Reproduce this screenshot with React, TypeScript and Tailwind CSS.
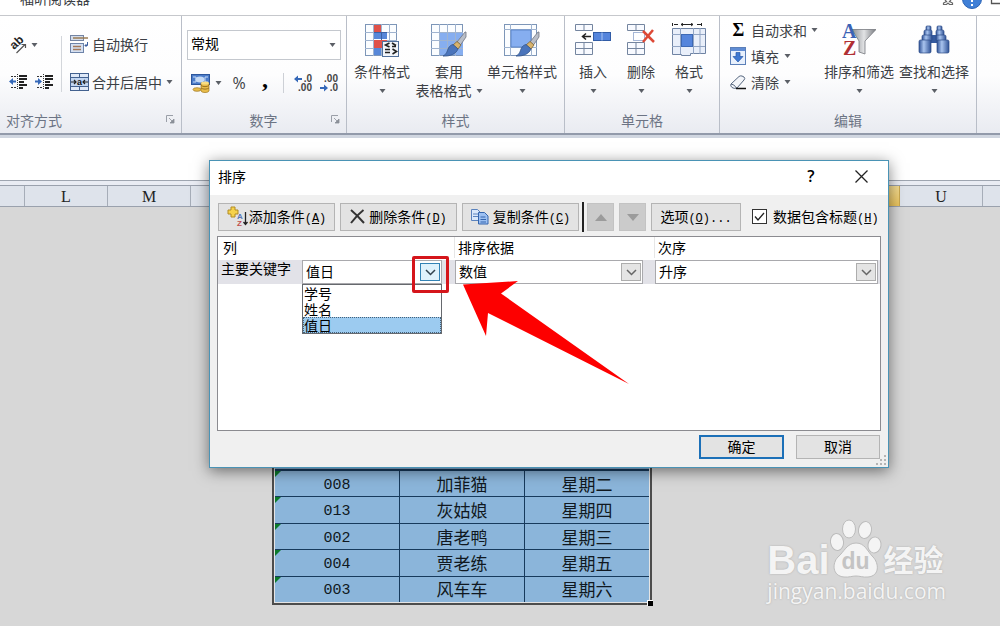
import type { ReactNode } from "react";

const cjk = "font-['Noto_Sans_CJK_SC',sans-serif]";

function Caret() {
  return (
    <svg width="7" height="4" viewBox="0 0 7 4" className="block shrink-0" aria-hidden="true">
      <path d="M0.5 0h6L3.5 4z" fill="#5b5f66" />
    </svg>
  );
}

function Chevron({ color }: { color: string }) {
  return (
    <svg width="11" height="7" viewBox="0 0 11 7" fill="none" aria-hidden="true">
      <path d="M1 1l4.5 4.5L10 1" stroke={color} strokeWidth="1.5" />
    </svg>
  );
}

function Launcher() {
  return (
    <button type="button" aria-label="更多" className="shrink-0">
      <svg width="9" height="9" viewBox="0 0 9 9" fill="none">
        <path d="M0.5 7V0.5H7" stroke="#9a9fa8" />
        <path d="M3 3l4 4M8 4v4H4z" stroke="#8a8f98" fill="#8a8f98" strokeWidth="0.8" />
      </svg>
    </button>
  );
}

function Group({ title, width, launcher, children }: { title: string; width: string; launcher?: boolean; children: ReactNode }) {
  return (
    <section className={`flex shrink-0 flex-col border-r border-[#b9bec8] ${width}`}>
      <div className="flex-1">{children}</div>
      <div className="flex h-[25px] items-center px-[6px] pb-0.5 leading-5 text-[#6c7484]">
        {launcher && title === "数字" && <span className="w-2" />}
        <span className={title === "对齐方式" ? "flex-1" : "flex-1 text-center"}>{title}</span>
        {launcher && <Launcher />}
      </div>
    </section>
  );
}

function BigButton({ icon, label, second, width }: { icon: ReactNode; label: string; second?: string; width: string }) {
  return (
    <button type="button" className={`flex shrink-0 flex-col items-center whitespace-nowrap pt-[7px] ${width}`}>
      {icon}
      <span className="mt-1 leading-5">{label}</span>
      <span className="flex h-[19px] items-center gap-1 leading-[19px]">
        {second && <span>{second}</span>}
        <Caret />
      </span>
    </button>
  );
}

function Orientation() {
  return (
    <svg width="18" height="17" viewBox="0 0 18 17" className="overflow-visible" aria-hidden="true">
      <text x="0" y="0" transform="translate(5 13) rotate(-42)" fontFamily="Liberation Sans" fontWeight="bold" fontSize="12" fill="#222">ab</text>
      <path d="M7.500 16L16 7.500M12.500 7.500H16.500V11" stroke="#555" strokeWidth="1.200" fill="none" />
    </svg>
  );
}

function Indent({ inward }: { inward?: boolean }) {
  return (
    <svg width="19" height="16" viewBox="0 0 19 16" aria-hidden="true">
      <path d="M8.500 0v16" stroke="#333" strokeDasharray="1 1" />
      <path d="M2 2.500h5M2 13.500h5" stroke="#333" strokeDasharray="2 1" />
      <path d="M10 2h8M10 5h8M10 8h5M10 11h8M10 14h4" stroke="#222" strokeWidth="2" />
      {inward ? <path d="M0 6.500h3V4l4 3.500L3 11V8.500H0z" fill="#3568b8" /> : <path d="M7 6.500H4V4L0 7.500L4 11V8.500h3z" fill="#3568b8" />}
    </svg>
  );
}

function WrapIcon() {
  return (
    <svg width="19" height="18" viewBox="0 0 19 18" fill="none" aria-hidden="true">
      <rect x="0.500" y="0.500" width="13" height="5" fill="#d3dcea" stroke="#7384a3" />
      <path d="M3 3h15" stroke="#9b7c55" strokeWidth="1.500" />
      <rect x="0.500" y="8.500" width="13" height="9" fill="#d5e0f2" stroke="#6d83a8" />
      <path d="M3 11.500h8M3 14.500h8" stroke="#a3785a" strokeWidth="1.500" />
      <path d="M17.500 7v3.500H15M16.500 9l-1.500 1.500l1.500 1.500" stroke="#3c5fa0" />
    </svg>
  );
}

function MergeIcon() {
  return (
    <svg width="19" height="18" viewBox="0 0 19 18" fill="none" aria-hidden="true">
      <rect x="0.500" y="0.500" width="18" height="17" fill="#dfe9f8" stroke="#43618f" />
      <path d="M1 5h17v8H1z" fill="#c2d6f2" />
      <path d="M0 4.500h19M0 13.500h19M9.500 0v4M9.500 14v4" stroke="#43618f" />
      <path d="M1 9h5M4 7l2 2l-2 2M18 9h-5M15 7l-2 2l2 2" stroke="#222" strokeWidth="1.200" />
      <text x="7" y="12" fontFamily="Liberation Sans" fontWeight="bold" fontSize="9" fill="#111">a</text>
    </svg>
  );
}

function CurrencyIcon() {
  return (
    <svg width="20" height="19" viewBox="0 0 20 19" aria-hidden="true">
      <rect x="0.500" y="0.500" width="18" height="10" fill="#4c7cc9" stroke="#2c569c" />
      <ellipse cx="9" cy="5.500" rx="4.500" ry="3" fill="#c5daf5" />
      <path d="M2 3h3v5H2M17 3h-3v5h3" stroke="#c5daf5" fill="none" />
      <ellipse cx="6" cy="15.500" rx="4" ry="1.800" fill="#e9bd4b" stroke="#9c7420" strokeWidth="0.700" />
      <path d="M10 9v8c1 2 7 2 8 0V9z" fill="#e9bd4b" stroke="#9c7420" strokeWidth="0.700" />
      <path d="M10 11.500c2 1.500 6 1.500 8 0M10 14c2 1.500 6 1.500 8 0" stroke="#9c7420" fill="none" />
      <ellipse cx="14" cy="9" rx="4" ry="1.600" fill="#f8dd83" />
    </svg>
  );
}

function DecimalIcon({ less }: { less?: boolean }) {
  return (
    <svg width="18" height="17" viewBox="0 0 18 17" fontFamily="Liberation Sans" fontSize="10" fontWeight="bold" fill="#444" className="overflow-visible" aria-hidden="true">
      <text x="18" y="7" textAnchor="end">{less ? ".00" : ".0"}</text>
      <text x="18" y="16" textAnchor="end">{less ? ".0" : ".00"}</text>
      {less ? <path d="M0 12h4V9.500l4 3.500l-4 3.500V14H0z" fill="#3568b8" /> : <path d="M8 3H4V0.500L0 4l4 3.500V5h4z" fill="#3568b8" />}
    </svg>
  );
}

function GridBase() {
  return (
    <>
      <rect x="0.500" y="1.500" width="31" height="31" fill="#fbfdff" stroke="#7d96b8" />
      <path d="M8.500 1v32M16.500 1v32M24.500 1v32M0 9.500h32M0 17.500h32M0 25.500h32" stroke="#9fb3cf" />
    </>
  );
}

function Brush() {
  return (
    <>
      <path d="M34 9L26 19l3.500 3L35 14V9z" fill="#b9bec8" stroke="#6e7480" strokeWidth="0.800" />
      <path d="M26 18.500l4 3.500l-3 4l-5-4z" fill="#d8b36d" stroke="#7f6431" strokeWidth="0.800" />
      <path d="M22 21.500l5 4.500c-2 5-8 7.500-15 7c4-2 4-5 5.500-8c1-2 2.500-3 4.500-3.500z" fill="#4a74bb" stroke="#335489" strokeWidth="0.800" />
    </>
  );
}

function ConditionalIcon() {
  return (
    <svg width="35" height="34" viewBox="0 0 35 34" aria-hidden="true">
      <GridBase />
      <path d="M9 2h7v7H9zM9 17h13v4H9z" fill="#df5149" />
      <path d="M9 17h8v8H9z" fill="#df5149" />
      <path d="M9 9h13v7H9zM9 25h7v7H9z" fill="#5787d8" />
      <path d="M16.500 9v8M9 9.500h13" stroke="#3c62a5" />
      <rect x="17.500" y="18.500" width="16" height="15" fill="#f2f5fa" stroke="#51709c" />
      <path d="M24.500 20l-4 2l4 2M20 26.500h5M20 29.500h5M27 20l4 2.500M27 23.500h4M27.500 26l4 2.500l-4 2.500" stroke="#222" strokeWidth="1.600" fill="none" />
    </svg>
  );
}

function TableFormatIcon() {
  return (
    <svg width="37" height="34" viewBox="0 0 37 34" aria-hidden="true">
      <GridBase />
      <path d="M9 10h7v7H9zM17 10h7v7h-7zM25 10h7v7h-7zM9 18h7v7H9zM17 18h7v7h-7zM25 18h7v7h-7zM9 26h7v6H9zM17 26h7v6h-7zM25 26h7v6h-7z" fill="#86aef0" />
      <Brush />
    </svg>
  );
}

function CellStyleIcon() {
  return (
    <svg width="37" height="34" viewBox="0 0 37 34" aria-hidden="true">
      <rect x="0.500" y="1.500" width="32" height="31" fill="#fbfdff" stroke="#7d96b8" />
      <path d="M6.500 1v32M27.500 1v32M0 6.500h33M0 24.500h33" stroke="#9fb3cf" />
      <path d="M7 7h20v17H7z" fill="#86aef0" stroke="#5d86c9" />
      <Brush />
    </svg>
  );
}

function InsertIcon() {
  return (
    <svg width="36" height="34" viewBox="0 0 36 34" fill="none" aria-hidden="true">
      <path d="M0.500 1.500h17v6H0.500zM9 1v6M0.500 19.500h17v12H0.500zM9 19.500v12M0.500 25.500h17" fill="#f8faff" stroke="#74859f" />
      <rect x="18.500" y="9.500" width="17" height="8" fill="#5585dc" stroke="#315ca6" />
      <path d="M27 9.500v8" stroke="#a9c5f3" />
      <path d="M16 13.500H8M11 10.500l-3.500 3l3.500 3" stroke="#222" strokeWidth="1.500" />
    </svg>
  );
}

function DeleteIcon() {
  return (
    <svg width="28" height="34" viewBox="0 0 28 34" fill="none" aria-hidden="true">
      <path d="M0.500 1.500h17v6H0.500zM9 1v6M0.500 19.500h17v12H0.500zM9 19.500v12M0.500 25.500h17" fill="#f8faff" stroke="#74859f" />
      <path d="M6.500 9.500h11v8h-11z" stroke="#4d6fad" strokeDasharray="1 1" />
      <path d="M16 8l11 11M26 7L16 19" stroke="#dd4936" strokeWidth="2.500" />
    </svg>
  );
}

function FormatIcon() {
  return (
    <svg width="36" height="34" viewBox="0 0 36 34" fill="none" aria-hidden="true">
      <path d="M1.500 0v3M30.500 0v3M3 1.500h4M26 1.500h4M10 1.500h12M12 0l-2 1.500l2 1.500M20 0l2 1.500l-2 1.500" stroke="#222" />
      <path d="M1.500 5.500h33v25h-15v2h-9v-1H1.500z" fill="#e9effa" stroke="#6f83a3" />
      <path d="M9.500 5v26M22.500 5v26M29 5v26M1 11.500h33M1 23.500h33" stroke="#92a5c4" />
      <rect x="10.500" y="11.500" width="11" height="12" fill="#5585dc" stroke="#3d69b5" />
    </svg>
  );
}

function SortIcon() {
  return (
    <svg width="34" height="34" viewBox="0 0 34 34" aria-hidden="true">
      <defs>
        <linearGradient id="funnel">
          <stop offset="0" stopColor="#8b8e92" />
          <stop offset="0.500" stopColor="#e2e3e5" />
          <stop offset="1" stopColor="#76797e" />
        </linearGradient>
      </defs>
      <path d="M10 6.500h24L23 18v13l-6-2V18z" fill="url(#funnel)" stroke="#777a80" strokeWidth="0.800" />
      <g fontFamily="Liberation Serif" fontWeight="bold" fontSize="20">
        <text x="0" y="15" fill="#3a62b5">A</text>
        <text x="1" y="32" fill="#b02f34">Z</text>
      </g>
    </svg>
  );
}

function BinocularsIcon() {
  return (
    <svg width="32" height="34" viewBox="0 0 32 34" aria-hidden="true">
      <defs>
        <linearGradient id="barrel">
          <stop offset="0" stopColor="#2f5296" />
          <stop offset="0.400" stopColor="#a9c4ee" />
          <stop offset="1" stopColor="#2f5296" />
        </linearGradient>
      </defs>
      <rect x="12" y="12" width="8" height="8" fill="#355a9e" />
      <g fill="url(#barrel)" stroke="#2d4c88" strokeWidth="0.700">
        <rect x="8" y="3" width="5" height="5" rx="1" />
        <rect x="6" y="7" width="8" height="6" rx="1.500" />
        <rect x="4" y="12" width="10" height="6" rx="1.500" />
        <rect x="1" y="17" width="12" height="13" rx="1.500" />
        <rect x="19" y="3" width="5" height="5" rx="1" />
        <rect x="18" y="7" width="8" height="6" rx="1.500" />
        <rect x="18" y="12" width="10" height="6" rx="1.500" />
        <rect x="19" y="17" width="12" height="13" rx="1.500" />
      </g>
    </svg>
  );
}

function FillIcon() {
  return (
    <svg width="16" height="18" viewBox="0 0 16 18" aria-hidden="true">
      <rect x="0.500" y="0.500" width="15" height="17" fill="#e8f0fc" stroke="#5b7fb8" />
      <rect x="1" y="1" width="14" height="3" fill="#5f8cd4" />
      <path d="M6 5.500h4v4h3L8 15L3 9.500h3z" fill="#3e78d2" stroke="#2658a6" strokeWidth="0.700" />
    </svg>
  );
}

function EraserIcon() {
  return (
    <svg width="17" height="15" viewBox="0 0 17 15" aria-hidden="true">
      <path d="M1 9l8-7.500q1-1 3-0.500l2 1q1.500 1.500 0 3L7 13q-3 1-5-0.500T1 9z" fill="#f4f6fa" stroke="#56677f" />
      <path d="M1 9q3 0 5.500 4" stroke="#56677f" fill="none" />
      <path d="M6 13.500h10" stroke="#111" strokeWidth="1.500" />
    </svg>
  );
}

function AddSortIcon() {
  return (
    <svg width="21" height="20" viewBox="0 0 21 20" className="overflow-visible" aria-hidden="true">
      <path d="M4 1h4v3h3v4H8v3H4V8H1V4h3z" fill="#f6d24a" stroke="#b18b22" />
      <g fontFamily="Liberation Sans" fontWeight="bold" fontSize="8">
        <text x="10" y="13" fill="#5577b5">A</text>
        <text x="10" y="20" fill="#c0504d">Z</text>
      </g>
      <path d="M18.500 6v12M16.500 16l2 2.500l2-2.500" stroke="#222" fill="none" strokeWidth="1.300" />
    </svg>
  );
}

function CopyIcon() {
  return (
    <svg width="18" height="17" viewBox="0 0 18 17" fill="none" aria-hidden="true">
      <path d="M0.500 1.500h6l3 3v8h-9z" fill="#d9e8fb" stroke="#5a82bd" />
      <path d="M2 6h5M2 8.500h5" stroke="#5a82bd" />
      <path d="M7.500 4.500h6l3.500 3.500v8H7.500z" fill="#9cc0f2" stroke="#3465ad" />
      <path d="M9.500 9h5M9.500 11.500h5.500M9.500 14h5.500" stroke="#3465ad" />
    </svg>
  );
}

function Key({ letter }: { letter: string }) {
  return (
    <span className="font-['Liberation_Mono',monospace] text-xs">
      (<u>{letter}</u>)
    </span>
  );
}

const dialogButton = "flex h-7 shrink-0 items-center justify-center border border-[#b4b4b4] bg-[#e3e3e3] pb-0.5 leading-5 whitespace-nowrap";

function Combo({ label, value, options, active, width }: { label: string; value: string; options: string[]; active?: boolean; width: string }) {
  return (
    <div className={`relative h-6 shrink-0 border border-[#a9a9ad] bg-white ${width}`}>
      <select aria-label={label} defaultValue={value} className="block h-full w-full appearance-none bg-transparent pb-1 pl-[3px] outline-none">
        {options.map((o) => (
          <option key={o}>{o}</option>
        ))}
      </select>
      <span
        className={`pointer-events-none absolute top-[2px] right-[1px] flex h-[18px] w-5 items-center justify-center border ${
          active ? "border-[#3383b5] bg-[#dff2fc]" : "border-[#adadad] bg-[#e4e4e4]"
        }`}
      >
        <Chevron color={active ? "#31424e" : "#666666"} />
      </span>
    </div>
  );
}

function SortDialog() {
  const keys = ["学号", "姓名", "值日"];
  return (
    <div role="dialog" aria-label="排序" className="absolute top-[160px] left-[209px] w-[680px] border border-[#4a93b5] bg-[#f0f0f0] text-black shadow-[0_3px_14px_rgba(0,0,0,0.5)]">
      <div className="flex h-[34px] items-center bg-white pr-5 pb-1 pl-2">
        <h2 className="flex-1">排序</h2>
        <button type="button" aria-label="帮助" className="w-4 font-['Open_Sans',sans-serif] text-base font-semibold">?</button>
        <button type="button" aria-label="关闭" className="ml-9">
          <svg width="13" height="13" viewBox="0 0 13 13">
            <path d="M0.500 0.500l12 12M12.500 0.500l-12 12" stroke="#222" strokeWidth="1.300" />
          </svg>
        </button>
      </div>
      <div className="px-[7px] pt-2 pb-2">
        <div className="flex h-7 items-center gap-[5px] pl-px">
          <button type="button" className={`${dialogButton} w-[117px]`}>
            <AddSortIcon />
            <span className="ml-px">添加条件<Key letter="A" /></span>
          </button>
          <button type="button" className={`${dialogButton} w-[117px] gap-1`}>
            <svg width="15" height="15" viewBox="0 0 15 15">
              <path d="M1 1q6 5 13 13M13.500 1Q7 6 1 14" stroke="#333" strokeWidth="2" fill="none" />
            </svg>
            <span>删除条件<Key letter="D" /></span>
          </button>
          <button type="button" className={`${dialogButton} w-[117px] gap-1`}>
            <CopyIcon />
            <span>复制条件<Key letter="C" /></span>
          </button>
          <div className="-mx-0.5 h-[30px] w-0.5 bg-[#222]" />
          <button type="button" aria-label="上移" disabled className="flex h-7 w-[27px] items-center justify-center border border-[#c3c3c3] bg-[#cbcbcb]">
            <svg width="12" height="7" viewBox="0 0 12 7"><path d="M6 0l6 7H0z" fill="#9b9b9b" /></svg>
          </button>
          <button type="button" aria-label="下移" disabled className="flex h-7 w-[27px] items-center justify-center border border-[#c3c3c3] bg-[#cbcbcb]">
            <svg width="12" height="7" viewBox="0 0 12 7"><path d="M6 7L0 0h12z" fill="#9b9b9b" /></svg>
          </button>
          <button type="button" className={`${dialogButton} w-[90px]`}>
            <span>选项<Key letter="O" /><span className="font-['Liberation_Mono',monospace] text-xs">...</span></span>
          </button>
          <label className="ml-1.5 flex items-center gap-1.5 pb-0.5 leading-5 whitespace-nowrap">
            <span className="relative flex">
              <input type="checkbox" defaultChecked className="peer h-[15px] w-[15px] appearance-none border border-[#333] bg-white" />
              <svg width="15" height="15" viewBox="0 0 15 15" className="pointer-events-none absolute inset-0 hidden peer-checked:block">
                <path d="M3 7.500l3 3.500l6-7" stroke="#222" strokeWidth="1.300" fill="none" />
              </svg>
            </span>
            <span>数据包含标题<Key letter="H" /></span>
          </label>
        </div>

        <div className="mt-[5px] h-[195px] border border-[#8b8b90] bg-white">
          <div className="grid h-[23px] grid-cols-[236px_200px_1fr] items-center pb-0.5 leading-[21px]">
            <span className="pl-[5px]">列</span>
            <span className="border-l border-[#e6e6e6] pl-[3px]">排序依据</span>
            <span className="border-l border-[#e6e6e6] pl-[3px]">次序</span>
          </div>
          <div className="grid h-6 grid-cols-[236px_200px_1fr] bg-[#e2e2e8]">
            <div className="relative flex">
              <span className="w-[84px] shrink-0 pl-[3px] leading-4">主要关键字</span>
              <Combo label="主要关键字" value="值日" options={keys} active width="w-[140px]" />
              <ul role="listbox" aria-label="列选项" className="absolute top-6 left-[84px] w-[140px] border border-[#66696e] bg-white">
                {keys.map((k) => (
                  <li
                    key={k}
                    role="option"
                    aria-selected={k === "值日"}
                    className={`h-4 px-px leading-4 ${k === "值日" ? "bg-[#9ccbf0] outline-1 -outline-offset-1 outline-dotted outline-[#44617a]" : ""}`}
                  >
                    {k}
                  </li>
                ))}
              </ul>
              <div className="pointer-events-none absolute -top-1 left-[194px] h-[37px] w-[37px] rounded-[2px] border-3 border-[#d5151b]" />
            </div>
            <div className="pl-px"><Combo label="排序依据" value="数值" options={["数值"]} width="w-[188px]" /></div>
            <div className="pr-[2px] pl-px"><Combo label="次序" value="升序" options={["升序", "降序"]} width="w-full" /></div>
          </div>
        </div>

        <div className="mt-1 flex justify-end gap-3 pr-px">
          <button type="button" className="h-6 w-[85px] border-2 border-[#1c70b8] bg-[#e3e3e3] pb-0.5 leading-[18px]">确定</button>
          <button type="button" className="h-6 w-[84px] border border-[#b4b4b4] bg-[#e3e3e3] pb-0.5 leading-5">取消</button>
        </div>
      </div>
      <svg width="10" height="10" viewBox="0 0 10 10" fill="#b5b5b5" className="absolute right-0.5 bottom-0.5" aria-hidden="true">
        <path d="M8 0h2v2H8zM4 4h2v2H4zM8 4h2v2H8zM0 8h2v2H0zM4 8h2v2H4zM8 8h2v2H8z" />
      </svg>
      <svg width="168" height="106" viewBox="0 0 168 106" className="pointer-events-none absolute top-[119px] left-[252px]" aria-hidden="true">
        <path d="M1 4.500L56 1L39 13.500L167 104L26 33L24 56z" fill="#fd0000" />
      </svg>
    </div>
  );
}

const rows = [
  ["008", "加菲猫", "星期二"],
  ["013", "灰姑娘", "星期四"],
  ["002", "唐老鸭", "星期三"],
  ["004", "贾老练", "星期五"],
  ["003", "风车车", "星期六"],
];

function SheetTable() {
  return (
    <div className="relative mt-[253px] ml-[272px] w-[380px] border-2 border-[#4c4c4c] bg-[#8bb5da]">
      <div className="border border-[#e4e4e4] pt-[6px]">
        <table className="h-[133px] w-full table-fixed border-collapse text-[17px] leading-5 text-[#101820]">
          <tbody>
            {rows.map((r, i) => (
              <tr key={r[0]}>
                {r.map((c, j) => (
                  <td key={c} className={`relative border-[#173a5c] p-0 text-center ${i === 0 ? "border-t-2" : "border-t"} ${j > 0 ? "border-l" : ""}`}>
                    {j === 0 && (
                      <svg width="6" height="6" className="absolute top-0 left-0" aria-hidden="true">
                        <path d="M0 0h6L0 6z" fill="#0b7a2c" />
                      </svg>
                    )}
                    <span className={j === 0 ? "font-['Liberation_Mono',monospace] text-[15px]" : ""}>{c}</span>
                  </td>
                ))}
              </tr>
            ))}
          </tbody>
        </table>
      </div>
      <span className="absolute -right-[3px] -bottom-[3px] h-[6px] w-[6px] border-t border-l border-white bg-black" />
    </div>
  );
}

function Watermark() {
  return (
    <div className="absolute right-[54px] bottom-[22px] text-[#f4f4f4] [text-shadow:0_0_2px_#a8a8a8]">
      <div className="flex h-[60px] items-end">
        <span className="font-['Liberation_Sans',sans-serif] text-[40px] leading-9 font-bold">Bai</span>
        <div className="relative h-[60px] w-[52px]">
          <svg width="52" height="60" viewBox="0 0 52 60" fill="#f4f4f4" stroke="#bcbcbc" aria-hidden="true">
            <ellipse cx="7" cy="24" rx="6.500" ry="8.500" transform="rotate(-8 7 24)" />
            <ellipse cx="19" cy="11" rx="6.500" ry="9" />
            <ellipse cx="35" cy="12" rx="6.500" ry="8.500" transform="rotate(10 35 12)" />
            <ellipse cx="44.500" cy="27" rx="6.500" ry="8" transform="rotate(10 44.500 27)" />
            <path d="M26 25c9 0 11 8 17 14c6 6 7 19-5 20c-5 0.500-8-1-12-1s-7 1.500-12 1C2 58 2 45 8 39c6-5 9-14 18-14z" />
          </svg>
          <span className="absolute inset-x-0 bottom-[5px] text-center font-['Liberation_Sans',sans-serif] text-[23px] leading-6 font-bold text-[#c4c4c4] [text-shadow:none]">du</span>
        </div>
        <span className="ml-0.5 text-[30px] leading-10 font-bold">经验</span>
      </div>
      <div className="font-['Open_Sans',sans-serif] text-[21px] leading-[26px]">jingyan.baidu.com</div>
    </div>
  );
}

export default function App() {
  return (
    <div className={`relative flex min-h-screen flex-col overflow-hidden bg-[#d7d7d7] text-sm text-[#3c3f45] ${cjk}`}>
      <header className="flex h-[15px] shrink-0 items-start justify-between overflow-hidden bg-white pr-0 pl-5">
        <a href="#reader" className="-mt-3 leading-5">福昕阅读器</a>
        <div className="flex h-[10px] items-start gap-2">
          <svg width="12" height="6" viewBox="0 0 12 6" fill="none" aria-hidden="true">
            <path d="M3 0L5 2M9 0L7 2M4.500 1.500L1.500 3V4.500H4.500L6 3L7.500 4.500H10.500V3L7.500 1.500" stroke="#666" strokeWidth="1.200" />
          </svg>
          <svg width="20" height="10" viewBox="0 0 20 10" aria-hidden="true">
            <circle cx="10" cy="-1" r="9.500" fill="#3f7fd6" stroke="#2a62b4" />
            <path d="M9 0h2v2H9zM9 4h2v2H9z" fill="#fff" />
          </svg>
          <svg width="10" height="6" viewBox="0 0 10 6" fill="none" aria-hidden="true">
            <path d="M1.500 0v3.500H10" stroke="#555" strokeWidth="1.300" />
          </svg>
        </div>
      </header>

      <div className="flex h-[118px] shrink-0 border-t border-[#c6c8cc] bg-linear-to-b from-white via-[#fdfdfe] to-[#e9ebf1]">
        <Group title="对齐方式" width="w-[182px]" launcher>
          <div className="flex pt-[9px]">
            <div className="mt-[11px] h-[56px] w-[62px] shrink-0 border-r border-[#d3d6db] pl-[9px]">
              <button type="button" aria-label="方向" className="flex h-[18px] items-center gap-1"><Orientation /><Caret /></button>
              <div className="mt-5 flex gap-[7px]">
                <button type="button" aria-label="减少缩进量"><Indent /></button>
                <button type="button" aria-label="增加缩进量"><Indent inward /></button>
              </div>
            </div>
            <div className="pl-2">
              <button type="button" className="flex h-[38px] items-center gap-[3px] leading-5"><WrapIcon />自动换行</button>
              <button type="button" className="flex h-[38px] items-center gap-[3px] leading-5"><MergeIcon />合并后居中<span className="ml-px"><Caret /></span></button>
            </div>
          </div>
        </Group>

        <Group title="数字" width="w-[165px]" launcher>
          <div className="px-[5px] pt-2.5">
            <div className="flex h-[38px] items-center">
              <div className="relative w-full">
                <select aria-label="数字格式" className="block h-[30px] w-full appearance-none border border-[#c4c8ce] bg-white pb-1 pl-[3px] text-black">
                  <option>常规</option>
                </select>
                <span className="pointer-events-none absolute top-[13px] right-[5px]"><Caret /></span>
              </div>
            </div>
            <div className="flex h-[38px] items-center pl-1">
              <button type="button" aria-label="会计数字格式" className="flex items-center gap-1"><CurrencyIcon /><Caret /></button>
              <button type="button" aria-label="百分比样式" className="ml-[9px] w-4 font-['Open_Sans',sans-serif] text-base">%</button>
              <button type="button" aria-label="千位分隔样式" className="ml-3 w-3 pb-2 font-['Liberation_Serif',serif] text-2xl leading-5 font-bold text-black">,</button>
              <span className="ml-3 h-5 w-px bg-[#cdd0d6]" />
              <button type="button" aria-label="增加小数位数" className="ml-2.5"><DecimalIcon /></button>
              <button type="button" aria-label="减少小数位数" className="ml-2"><DecimalIcon less /></button>
            </div>
          </div>
        </Group>

        <Group title="样式" width="w-[218px]">
          <div className="flex">
            <BigButton icon={<ConditionalIcon />} label="条件格式" width="w-[70px]" />
            <BigButton icon={<TableFormatIcon />} label="套用" second="表格格式" width="w-[64px]" />
            <BigButton icon={<CellStyleIcon />} label="单元格样式" width="w-[82px]" />
          </div>
        </Group>

        <Group title="单元格" width="w-[155px]">
          <div className="flex pl-1">
            <BigButton icon={<InsertIcon />} label="插入" width="w-12" />
            <BigButton icon={<DeleteIcon />} label="删除" width="w-12" />
            <BigButton icon={<FormatIcon />} label="格式" width="w-12" />
          </div>
        </Group>

        <Group title="编辑" width="w-[257px]">
          <div className="flex">
            <div className="w-[101px] shrink-0 pt-px pl-2.5">
              <button type="button" className="flex h-[26px] items-center gap-1 leading-5 whitespace-nowrap">
                <span className="w-[17px] text-center font-['Liberation_Serif',serif] text-lg leading-5 font-bold text-black">Σ</span>自动求和<Caret />
              </button>
              <button type="button" className="flex h-[26px] items-center gap-1 leading-5 whitespace-nowrap"><span className="w-[17px]"><FillIcon /></span>填充<span className="ml-px"><Caret /></span></button>
              <button type="button" className="flex h-[26px] items-center gap-1 leading-5 whitespace-nowrap"><EraserIcon />清除<span className="ml-px"><Caret /></span></button>
            </div>
            <BigButton icon={<SortIcon />} label="排序和筛选" width="w-[76px]" />
            <BigButton icon={<BinocularsIcon />} label="查找和选择" width="w-[74px]" />
          </div>
        </Group>
      </div>

      <div className="h-[5px] shrink-0 border-t-2 border-[#929aaa] bg-[#d0d6e0]" />
      <div className="h-[42px] shrink-0 bg-white" />
      <div className="h-[5px] shrink-0 border-t border-[#9ea5b0] bg-[#e9ecf3]" />
      <div className="flex h-[22px] shrink-0 border-y border-[#9aa1ad] bg-[#dee3eb] text-center font-['Liberation_Serif',serif] text-base leading-[22px] text-[#222]">
        <div className="w-[25px] border-r border-[#a6adb8]" />
        <div className="w-[83px] border-r border-[#a6adb8]">L</div>
        <div className="w-[83px] border-r border-[#a6adb8]">M</div>
        <div className="w-[82px] border-r border-[#a6adb8]" />
        <div className="flex-1 border-r border-[#c9a750] bg-linear-to-b from-[#f4dc92] to-[#eac35b]" />
        <div className="w-[83px] border-r border-[#a6adb8]">U</div>
        <div className="w-[17px]" />
      </div>
      <main className="flex-1">
        <SheetTable />
      </main>
      <SortDialog />
      <Watermark />
    </div>
  );
}
